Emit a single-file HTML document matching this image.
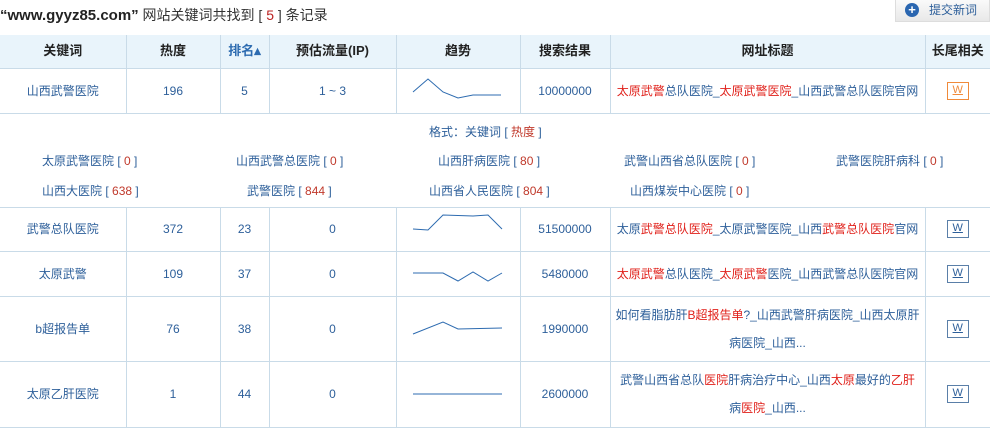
<!DOCTYPE html>
<html><head><meta charset="utf-8"><style>
*{margin:0;padding:0;box-sizing:border-box}
body{width:990px;height:427px;overflow:hidden;background:#fff;font-family:"Liberation Sans","Noto Sans CJK SC",sans-serif;font-size:12px;color:#2d5f9a;position:relative}
.top{position:absolute;left:0;top:5px;font-size:14px;color:#333}
.top b{font-size:15px;color:#222}
.btn{position:absolute;left:895px;top:0;width:95px;height:22px;background:linear-gradient(#fafafa,#e8e8e8);border:1px solid #ddd;border-top:none;font-size:12px;color:#2d5f9a;line-height:20px;padding-left:33px}
.btn i{position:absolute;left:9px;top:3px;width:14px;height:14px;border-radius:50%;background:#2a66b0;color:#fff;font-style:normal;font-weight:bold;font-size:13px;line-height:14px;text-align:center}
table{position:absolute;left:0;top:35px;border-collapse:collapse;width:990px;table-layout:fixed}
td,th{text-align:center;border-bottom:1px solid #c9dbe8;border-left:1px solid #c9dbe8;line-height:16px;padding:0}
td:first-child,th:first-child{border-left:none}
th{background:#e9f4fb;height:33px;font-size:13px;color:#222;font-weight:bold}
th.s{color:#2d6bb0}
.r{color:#e0201a}
.w{display:inline-block;width:22px;height:18px;border:1px solid #5a7fa8;font-size:11px;line-height:15px;color:#2d5f9a;text-decoration:underline;vertical-align:middle}
.w.o{border-color:#f08a3a;color:#f08a3a}
svg{display:block;margin:0 auto}
.ex td{border-left:none;color:#2d5f9a}
.ex .g{position:relative;height:94px}
.ex span{position:absolute;font-size:12px;line-height:16px}
.ex em{font-style:normal;color:#c0392b}
.tt{line-height:28px;padding:0 3px;white-space:nowrap}
</style></head><body>
<div class="top"><b>“www.gyyz85.com”</b> 网站关键词共找到 [ <span class="r" style="color:#b22">5</span> ] 条记录</div>
<div class="btn"><i>+</i>提交新词</div>
<table>
<colgroup><col style="width:126px"><col style="width:94px"><col style="width:49px"><col style="width:127px"><col style="width:124px"><col style="width:90px"><col style="width:315px"><col style="width:65px"></colgroup>
<tr><th>关键词</th><th>热度</th><th class="s">排名▴</th><th>预估流量(IP)</th><th>趋势</th><th>搜索结果</th><th>网址标题</th><th>长尾相关</th></tr>
<tr style="height:45px"><td>山西武警医院</td><td>196</td><td>5</td><td>1 ~ 3</td><td><svg width="124" height="30"><polyline fill="none" stroke="#2d6bb0" points="16,16 31,3 46,16 61,22 76,19 104,19"/></svg></td><td>10000000</td><td><span class="r">太原武警</span>总队医院_<span class="r">太原武警医院</span>_山西武警总队医院官网</td><td><span class="w o">W</span></td></tr>
<tr class="ex"><td colspan="8" class="g">
<span style="left:429px;top:10px">格式：关键词 [ <em>热度</em> ]</span>
<span style="left:42px;top:39px">太原武警医院 [ <em>0</em> ]</span>
<span style="left:236px;top:39px">山西武警总医院 [ <em>0</em> ]</span>
<span style="left:438px;top:39px">山西肝病医院 [ <em>80</em> ]</span>
<span style="left:624px;top:39px">武警山西省总队医院 [ <em>0</em> ]</span>
<span style="left:836px;top:39px">武警医院肝病科 [ <em>0</em> ]</span>
<span style="left:42px;top:69px">山西大医院 [ <em>638</em> ]</span>
<span style="left:247px;top:69px">武警医院 [ <em>844</em> ]</span>
<span style="left:429px;top:69px">山西省人民医院 [ <em>804</em> ]</span>
<span style="left:630px;top:69px">山西煤炭中心医院 [ <em>0</em> ]</span>
</td></tr>
<tr style="height:44px"><td>武警总队医院</td><td>372</td><td>23</td><td>0</td><td><svg width="124" height="30"><polyline fill="none" stroke="#2d6bb0" points="16,22 31,23 46,8 76,9 91,8 105,22" transform="translate(0,-7)"/></svg></td><td>51500000</td><td>太原<span class="r">武警总队医院</span>_太原武警医院_山西<span class="r">武警总队医院</span>官网</td><td><span class="w">W</span></td></tr>
<tr style="height:45px"><td>太原武警</td><td>109</td><td>37</td><td>0</td><td><svg width="124" height="30"><polyline fill="none" stroke="#2d6bb0" points="16,14 46,14 61,22 76,13 91,22 105,14"/></svg></td><td>5480000</td><td><span class="r">太原武警</span>总队医院_<span class="r">太原武警</span>医院_山西武警总队医院官网</td><td><span class="w">W</span></td></tr>
<tr style="height:65px"><td>b超报告单</td><td>76</td><td>38</td><td>0</td><td><svg width="124" height="30"><polyline fill="none" stroke="#2d6bb0" points="16,20 46,8 61,15 105,14"/></svg></td><td>1990000</td><td class="tt">如何看脂肪肝<span class="r">B超报告单</span>?_山西武警肝病医院_山西太原肝<br>病医院_山西...</td><td><span class="w">W</span></td></tr>
<tr style="height:66px"><td>太原乙肝医院</td><td>1</td><td>44</td><td>0</td><td><svg width="124" height="30"><line x1="16" y1="15" x2="105" y2="15" stroke="#2d6bb0"/></svg></td><td>2600000</td><td class="tt">武警山西省总队<span class="r">医院</span>肝病治疗中心_山西<span class="r">太原</span>最好的<span class="r">乙肝</span><br>病<span class="r">医院</span>_山西...</td><td><span class="w">W</span></td></tr>
</table>
</body></html>
